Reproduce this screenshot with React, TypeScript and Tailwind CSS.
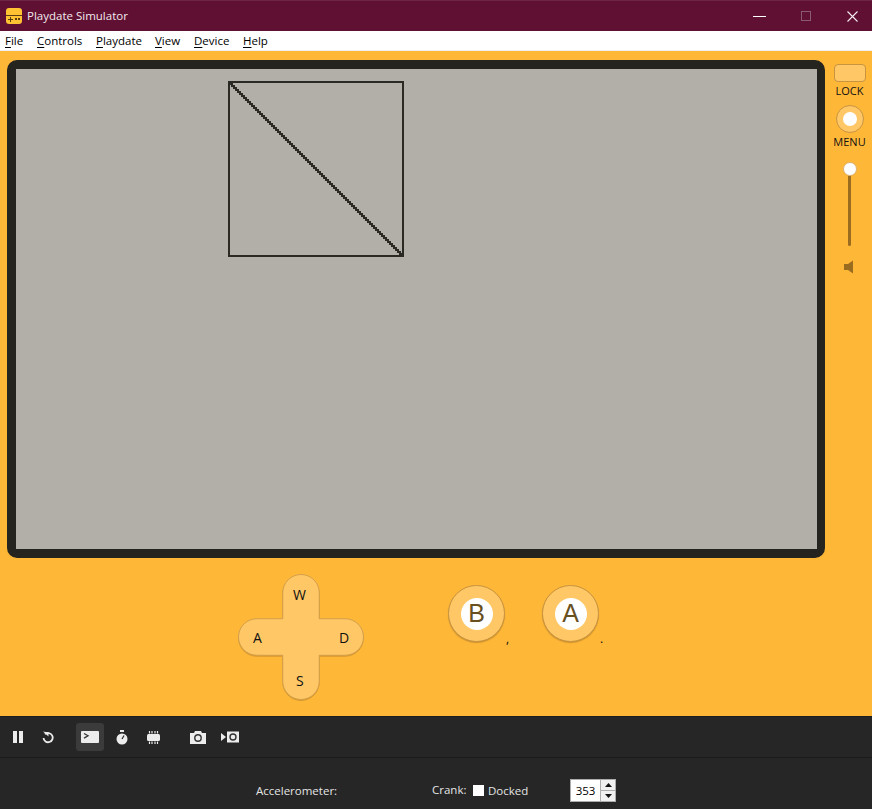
import React from "react";

const FONT = { fontFamily: '"Open Sans", "Noto Sans", sans-serif' };

const menuItems = [
  { label: "File", width: "w-[32px]" },
  { label: "Controls", width: "w-[59px]" },
  { label: "Playdate", width: "w-[59px]" },
  { label: "View", width: "w-[39px]" },
  { label: "Device", width: "w-[49px]" },
  { label: "Help", width: "w-[40px]" },
];

// the diagonal on the device screen is pixel art, so it is drawn row by row
const diagonalSteps = Array.from({ length: 86 }, (_, i) => i * 2);

function AppIcon() {
  return (
    <svg width="16" height="16" viewBox="0 0 16 16" className="shrink-0">
      <rect width="16" height="16" rx="3" fill="#FFC233" />
      <rect y="7" width="16" height="1" fill="#5a3d10" />
      <path d="M2 11.500h5M4.500 9v5" stroke="#5a3d10" strokeWidth="1" />
      <rect x="9" y="10" width="2" height="2" fill="#5a3d10" />
      <rect x="12" y="10" width="2" height="2" fill="#5a3d10" />
    </svg>
  );
}

function TitleBar() {
  return (
    <div className="h-[31px] shrink-0 bg-[#5F1033] flex items-center pl-[6px] border-t border-[#6d2545]">
      <AppIcon />
      <span className="ml-[5px] text-[11.5px] text-[#f3e9ed]">Playdate Simulator</span>
      <div className="ml-auto flex items-center">
        <div className="w-[13px] h-px bg-white mr-[35px]" />
        <div className="w-[10px] h-[10px] border border-[#8a5a70] mr-[36px]" />
        <svg width="11" height="11" viewBox="0 0 11 11" className="mr-[14px]">
          <path d="M0.5 0.5l10 10M10.5 0.5l-10 10" stroke="#f5eef1" strokeWidth="1.1" />
        </svg>
      </div>
    </div>
  );
}

function MenuBar() {
  return (
    <div className="h-[20px] shrink-0 bg-white flex items-center pl-[5px] border-b border-[#eeeeee] text-[11.5px] text-black">
      {menuItems.map((item) => (
        <span key={item.label} className={item.width}>
          <span className="underline underline-offset-2">{item.label[0]}</span>
          {item.label.slice(1)}
        </span>
      ))}
    </div>
  );
}

function Screen() {
  return (
    <div className="h-[498px] rounded-[10px] bg-[#25241F] p-[9px] pr-[8px]">
      <div className="relative h-[480px] bg-[#B1AFA8]">
        <svg
          width="176"
          height="176"
          viewBox="0 0 176 176"
          shapeRendering="crispEdges"
          className="absolute left-[212px] top-[12px]"
        >
          <rect x="1" y="1" width="174" height="174" fill="none" stroke="#2A2924" strokeWidth="2" />
          {diagonalSteps.map((n) => (
            <rect key={n} x={n + 1} y={n + 2} width="4" height="2" fill="#2A2924" />
          ))}
        </svg>
      </div>
    </div>
  );
}

function DPad() {
  return (
    <div className="relative w-[128px] h-[128px] ml-[230px] shrink-0">
      <svg
        width="128"
        height="128"
        viewBox="0 0 128 128"
        className="absolute inset-0 drop-shadow-[0_1px_0_rgba(150,100,30,0.35)]"
      >
        <path
          d="M45.75 18.75A18.25 18.25 0 0 1 82.25 18.75V44.75H108.25A18.25 18.25 0 0 1 108.25 81.25H82.25V107.25A18.25 18.25 0 0 1 45.75 107.25V81.25H19.75A18.25 18.25 0 0 1 19.75 44.75H45.75Z"
          fill="#FFC766"
          stroke="#D29F4B"
          strokeWidth="1"
        />
      </svg>
      <span className="absolute left-[56px] top-[11px] text-[14px] leading-[20px] text-[#111]">W</span>
      <span className="absolute left-[16px] top-[54px] text-[14px] leading-[20px] text-[#111]">A</span>
      <span className="absolute left-[102px] top-[54px] text-[14px] leading-[20px] text-[#111]">D</span>
      <span className="absolute left-[59px] top-[97px] text-[14px] leading-[20px] text-[#111]">S</span>
    </div>
  );
}

function RoundButton({ letter, keyHint }: { letter: string; keyHint: string }) {
  return (
    <div className="relative w-[58px] h-[58px]">
      <div className="w-[57px] h-[57px] rounded-full bg-[#FFC766] border border-[#C79440] shadow-[0_1px_1px_rgba(120,80,20,0.35)] flex items-center justify-center">
        <div
          className="w-[32px] h-[32px] rounded-full bg-white flex items-center justify-center text-[25px] leading-none text-[#69501F]"
          style={{ fontFamily: '"Liberation Sans", sans-serif' }}
        >
          {letter}
        </div>
      </div>
      <span className="absolute left-[58px] top-[47px] text-[12px] leading-[14px] text-[#111]">{keyHint}</span>
    </div>
  );
}

function SidePanel() {
  return (
    <div className="w-[47px] shrink-0 flex flex-col items-center pt-[13px] ml-[1px]">
      <div className="w-[32px] h-[18px] rounded-[4px] bg-[#FFC766] border border-[#C79440]" />
      <span className="mt-[1px] text-[11px] leading-[16px] text-[#111]">LOCK</span>
      <div className="mt-[6px] w-[28px] h-[28px] rounded-full bg-[#FFC766] border border-[#C79440] flex items-center justify-center">
        <div className="w-[14px] h-[14px] rounded-full bg-white" />
      </div>
      <span className="mt-[1px] text-[11px] leading-[16px] text-[#111]">MENU</span>
      <div className="mt-[12px] w-[14px] h-[14px] rounded-full bg-white border border-[#d9b274]" />
      <div className="w-[3px] h-[70px] bg-[#9A6C20] rounded-b-sm" />
      <svg width="10" height="14" viewBox="0 0 10 14" className="mt-[14px] -ml-[2px]">
        <path d="M0 4h4L9 0.5v13L4 10H0z" fill="#9A6C20" />
      </svg>
    </div>
  );
}

function ToolbarIcons() {
  return (
    <div className="h-[42px] shrink-0 bg-[#262626] flex items-center border-t border-[#1d1d1d] border-b-[#1b1b1b] border-b">
      <svg width="10" height="12" viewBox="0 0 10 12" className="ml-[13px]">
        <path d="M0 0h4v12H0zM6 0h4v12H6z" fill="#ececec" />
      </svg>
      <svg width="12" height="13" viewBox="0 0 12 13" className="ml-[19px]">
        <path d="M3 3.200A4.600 4.600 0 1 1 1.500 7" fill="none" stroke="#ececec" strokeWidth="1.8" />
        <path d="M1 0.500l5.500 1v4z" fill="#ececec" />
      </svg>
      <div className="ml-[22px] w-[28px] h-[28px] rounded-[3px] bg-[#3b3b3b] flex items-center justify-center">
        <svg width="18" height="12" viewBox="0 0 18 12">
          <rect width="18" height="12" rx="1" fill="#ececec" />
          <path d="M3 2.500l4 2.300l-4 2.300" fill="none" stroke="#333" strokeWidth="1.3" />
        </svg>
      </div>
      <svg width="12" height="15" viewBox="0 0 12 15" className="ml-[12px]">
        <rect x="4" y="0" width="4" height="2" fill="#ececec" />
        <circle cx="6" cy="9" r="5.500" fill="#ececec" />
        <path d="M6 9l2-3.500" stroke="#262626" strokeWidth="1.2" />
      </svg>
      <svg width="13" height="13" viewBox="0 0 13 13" className="ml-[19px]">
        <rect x="0" y="3" width="13" height="7" rx="1.500" fill="#ececec" />
        <path d="M2.500 0v2.500M5 0v2.500M8 0v2.500M10.500 0v2.500M2.500 10.500v2.500M5 10.500v2.500M8 10.500v2.500M10.500 10.500v2.500" stroke="#ececec" strokeWidth="1.200" />
      </svg>
      <svg width="16" height="13" viewBox="0 0 16 13" className="ml-[30px]">
        <path d="M0 2h4l1-2h6l1 2h4v11H0z" fill="#ececec" />
        <circle cx="8" cy="7" r="3.200" fill="none" stroke="#333" strokeWidth="1.400" />
      </svg>
      <svg width="18" height="12" viewBox="0 0 18 12" className="ml-[15px]">
        <path d="M0 2l5 4l-5 4z" fill="#ececec" />
        <rect x="6" y="0.500" width="12" height="11" fill="#ececec" />
        <circle cx="12" cy="6" r="3" fill="none" stroke="#333" strokeWidth="1.400" />
      </svg>
    </div>
  );
}

function BottomPanel() {
  return (
    <div className="flex-1 bg-[#262626] flex items-start text-[11.5px] leading-[16px] text-[#e4e4e4]">
      <span className="ml-[256px] mt-[25px] w-[176px]">Accelerometer:</span>
      <span className="mt-[24px] w-[41px]">Crank:</span>
      <div className="mt-[27px] w-[11px] h-[11px] bg-white" />
      <span className="ml-[4px] mt-[25px] w-[82px]">Docked</span>
      <div className="mt-[21px] w-[46px] h-[23px] flex bg-white border border-[#adadad]">
        <span className="w-[29px] text-center text-black leading-[21px]">353</span>
        <div className="flex-1 flex flex-col gap-px bg-[#adadad] pl-px">
          <div className="flex-1 bg-[#f0f0f0] flex items-center justify-center">
            <svg width="7" height="4" viewBox="0 0 7 4"><path d="M3.500 0L7 4H0z" fill="#111" /></svg>
          </div>
          <div className="flex-1 bg-[#f0f0f0] flex items-center justify-center">
            <svg width="7" height="4" viewBox="0 0 7 4"><path d="M0 0h7L3.500 4z" fill="#111" /></svg>
          </div>
        </div>
      </div>
    </div>
  );
}

export default function App() {
  return (
    <div className="w-[872px] h-[809px] flex flex-col overflow-hidden" style={FONT}>
      <TitleBar />
      <MenuBar />
      <div className="h-[665px] shrink-0 bg-[#FFB738] flex pt-[9px] pl-[7px]">
        <div className="w-[818px] shrink-0">
          <Screen />
          <div className="flex pt-[16px]">
            <DPad />
            <div className="ml-[83px] mt-[11px] flex gap-[36px]">
              <RoundButton letter="B" keyHint="," />
              <RoundButton letter="A" keyHint="." />
            </div>
          </div>
        </div>
        <div className="-mt-[9px]">
          <SidePanel />
        </div>
      </div>
      <ToolbarIcons />
      <BottomPanel />
    </div>
  );
}
